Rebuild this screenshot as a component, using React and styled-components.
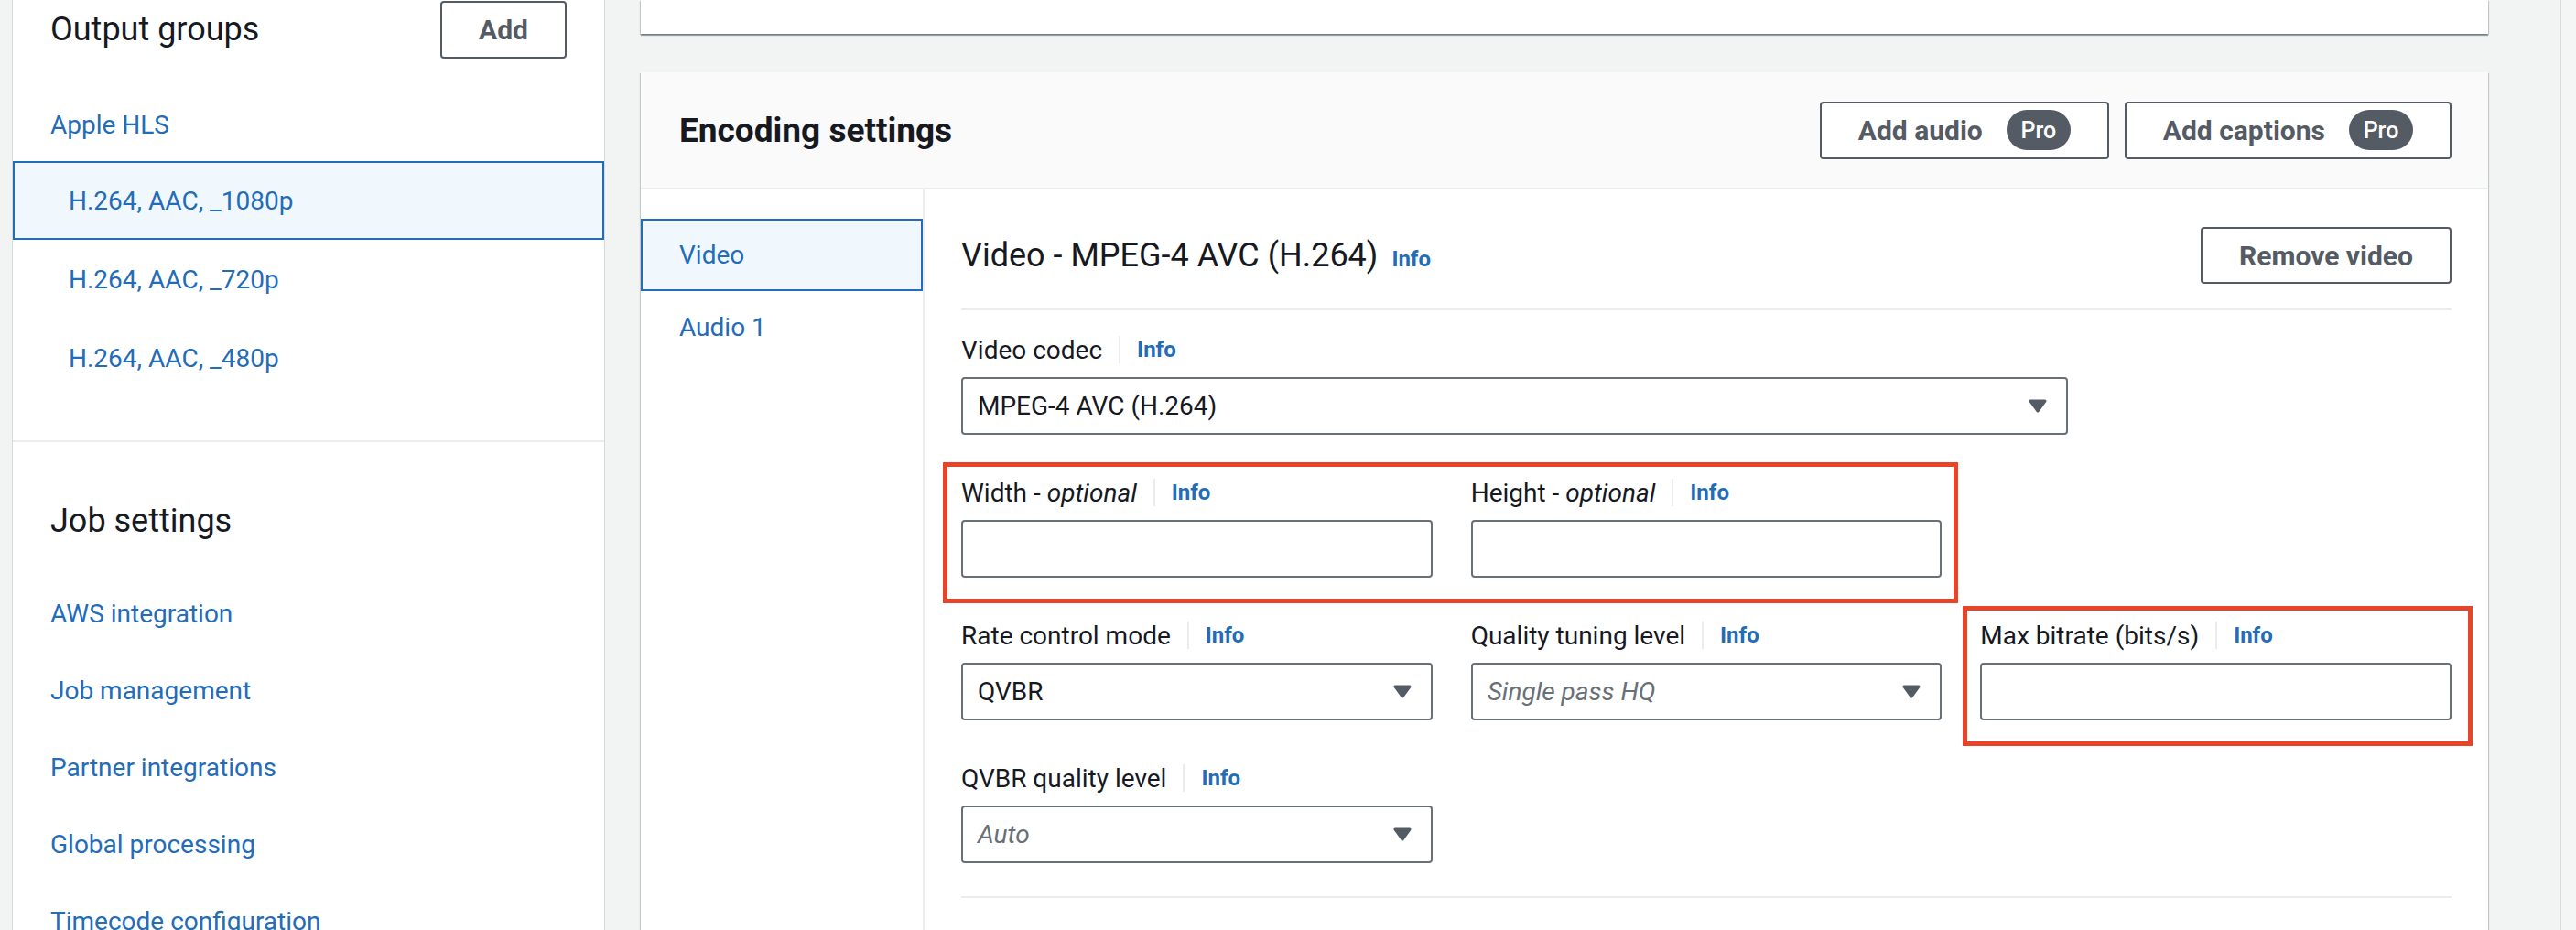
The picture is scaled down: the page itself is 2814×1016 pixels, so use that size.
import React from "react";
import styled, { createGlobalStyle } from "styled-components";

const GlobalStyle = createGlobalStyle`
  html, body {
    margin: 0;
    padding: 0;
    background: #f2f3f3;
  }
  body {
    font-family: Roboto, "Liberation Sans", sans-serif;
    color: #16191f;
    overflow: hidden;
  }
  * {
    box-sizing: border-box;
  }
`;

const BLUE = "#236cb8";

const outputs = ["H.264, AAC, _1080p", "H.264, AAC, _720p", "H.264, AAC, _480p"];
const jobLinks = [
  "AWS integration",
  "Job management",
  "Partner integrations",
  "Global processing",
  "Timecode configuration",
];

const Caret = () => (
  <CaretIcon width="20" height="15" viewBox="0 0 20 15">
    <path d="M2 2 H18 L10 13 Z" fill="#545b64" stroke="#545b64" strokeWidth="3" strokeLinejoin="round" />
  </CaretIcon>
);

const FieldLabel = ({ children }) => (
  <LabelRow>
    <span>{children}</span>
    <Sep />
    <Info>Info</Info>
  </LabelRow>
);

const App = () => {
  return (
    <>
      <GlobalStyle />
      <Page>
        <Sidebar>
          <SideHeader>
            <SideTitle>Output groups</SideTitle>
            <Button>Add</Button>
          </SideHeader>
          <GroupLink>Apple HLS</GroupLink>
          <OutputList>
            {outputs.map((o, i) => (
              <OutputItem key={o} $active={i === 0}>
                {o}
              </OutputItem>
            ))}
          </OutputList>
          <SideDivider />
          <JobTitle>Job settings</JobTitle>
          <JobList>
            {jobLinks.map((l) => (
              <JobLink key={l}>{l}</JobLink>
            ))}
          </JobList>
        </Sidebar>

        <Main>
          <TopCard />
          <Card>
            <CardHeader>
              <CardTitle>Encoding settings</CardTitle>
              <HeaderActions>
                <Button>
                  Add audio <Badge>Pro</Badge>
                </Button>
                <Button>
                  Add captions <Badge>Pro</Badge>
                </Button>
              </HeaderActions>
            </CardHeader>
            <CardBody>
              <Tabs>
                <Tab $active>Video</Tab>
                <Tab>Audio 1</Tab>
              </Tabs>
              <Content>
                <TitleRow>
                  <SectionTitle>
                    Video - MPEG-4 AVC (H.264)
                    <TitleInfo>Info</TitleInfo>
                  </SectionTitle>
                  <Button $h={62}>Remove video</Button>
                </TitleRow>
                <Divider />
                <CodecField>
                  <FieldLabel>Video codec</FieldLabel>
                  <Control>
                    <Value>MPEG-4 AVC (H.264)</Value>
                    <Caret />
                  </Control>
                </CodecField>
                <FieldGrid>
                  <PairGroup>
                    <Field>
                      <FieldLabel>
                        Width - <em>optional</em>
                      </FieldLabel>
                      <Control />
                    </Field>
                    <Field>
                      <FieldLabel>
                        Height - <em>optional</em>
                      </FieldLabel>
                      <Control />
                    </Field>
                  </PairGroup>
                  <div />
                  <Field>
                    <FieldLabel>Rate control mode</FieldLabel>
                    <Control>
                      <Value>QVBR</Value>
                      <Caret />
                    </Control>
                  </Field>
                  <Field>
                    <FieldLabel>Quality tuning level</FieldLabel>
                    <Control>
                      <Value $muted>Single pass HQ</Value>
                      <Caret />
                    </Control>
                  </Field>
                  <Field $highlight>
                    <FieldLabel>Max bitrate (bits/s)</FieldLabel>
                    <Control />
                  </Field>
                  <Field>
                    <FieldLabel>QVBR quality level</FieldLabel>
                    <Control>
                      <Value $muted>Auto</Value>
                      <Caret />
                    </Control>
                  </Field>
                </FieldGrid>
                <BottomDivider />
              </Content>
            </CardBody>
          </Card>
        </Main>
        <Gutter>
          <Scrollbar />
        </Gutter>
      </Page>
    </>
  );
};

export default App;

const Page = styled.div`
  display: flex;
  align-items: flex-start;
  height: 1016px;
  padding-left: 14px;
  overflow: hidden;
`;

const Sidebar = styled.aside`
  width: 646px;
  flex-shrink: 0;
  height: 1016px;
  background: #fff;
  box-shadow: 1px 0 0 #d5dbdb, -1px 0 0 #d5dbdb;
`;

const SideHeader = styled.div`
  display: flex;
  align-items: center;
  justify-content: space-between;
  height: 64px;
  padding: 0 41px;
`;

const SideTitle = styled.h2`
  margin: 0;
  font-size: 36px;
  font-weight: 400;
  color: #16191f;
`;

const Button = styled.button`
  display: inline-flex;
  align-items: center;
  gap: 26px;
  height: ${(p) => p.$h || 63}px;
  padding: 0 40px;
  background: #fff;
  border: 2px solid #545b64;
  border-radius: 4px;
  font-family: inherit;
  font-size: 30px;
  font-weight: 700;
  color: #545b64;
  white-space: nowrap;
`;

const Badge = styled.span`
  display: inline-flex;
  align-items: center;
  justify-content: center;
  width: 70px;
  height: 44px;
  border-radius: 22px;
  background: #545b64;
  color: #fff;
  font-size: 25px;
  font-weight: 500;
`;

const GroupLink = styled.div`
  margin-top: 53px;
  padding-left: 41px;
  line-height: 40px;
  font-size: 28px;
  color: ${BLUE};
`;

const OutputList = styled.div`
  margin-top: 19px;
`;

const OutputItem = styled.div`
  display: flex;
  align-items: center;
  height: 86px;
  padding-left: 59px;
  border: 2px solid ${(p) => (p.$active ? BLUE : "transparent")};
  background: ${(p) => (p.$active ? "#f1f8fd" : "transparent")};
  font-size: 28px;
  color: ${BLUE};
`;

const SideDivider = styled.div`
  margin-top: 47px;
  height: 2px;
  background: #eaeded;
`;

const JobTitle = styled.h2`
  margin: 64px 0 0;
  padding-left: 41px;
  line-height: 44px;
  font-size: 36px;
  font-weight: 400;
`;

const JobList = styled.div`
  margin-top: 38px;
`;

const JobLink = styled.div`
  height: 84px;
  line-height: 84px;
  padding-left: 41px;
  font-size: 28px;
  color: ${BLUE};
`;

const Main = styled.main`
  width: 2018px;
  flex-shrink: 0;
  margin-left: 40px;
`;

const cardShadow = `0 1px 1px 0 rgba(0, 28, 36, 0.3), 1px 1px 1px 0 rgba(0, 28, 36, 0.15), -1px 1px 1px 0 rgba(0, 28, 36, 0.15)`;

const TopCard = styled.div`
  height: 37px;
  background: #fff;
  box-shadow: 0 2px 1px 0 rgba(0, 28, 36, 0.35), 1px 1px 1px 0 rgba(0, 28, 36, 0.15),
    -1px 1px 1px 0 rgba(0, 28, 36, 0.15);
`;

const Card = styled.section`
  margin-top: 42px;
  height: 1000px;
  background: #fff;
  box-shadow: ${cardShadow};
`;

const CardHeader = styled.div`
  display: flex;
  align-items: center;
  justify-content: space-between;
  height: 128px;
  padding: 0 40px 0 42px;
  background: #fafafa;
  border-bottom: 2px solid #eaeded;
`;

const CardTitle = styled.h2`
  margin: 0;
  font-size: 37px;
  font-weight: 700;
`;

const HeaderActions = styled.div`
  display: flex;
  gap: 17px;
`;

const CardBody = styled.div`
  display: flex;
  height: 900px;
`;

const Tabs = styled.nav`
  width: 310px;
  flex-shrink: 0;
  padding-top: 32px;
  border-right: 2px solid #eaeded;
`;

const Tab = styled.div`
  display: flex;
  align-items: center;
  height: 79px;
  padding-left: 40px;
  border: 2px solid ${(p) => (p.$active ? BLUE : "transparent")};
  background: ${(p) => (p.$active ? "#f1f8fd" : "transparent")};
  font-size: 28px;
  color: ${BLUE};
`;

const Content = styled.div`
  flex: 1;
  padding: 41px 40px 0 40px;
`;

const TitleRow = styled.div`
  display: flex;
  align-items: center;
  justify-content: space-between;
  height: 62px;
`;

const SectionTitle = styled.h3`
  margin: 0;
  display: flex;
  align-items: baseline;
  font-size: 36px;
  font-weight: 400;
`;

const TitleInfo = styled.span`
  margin-left: 15px;
  font-size: 24px;
  font-weight: 700;
  color: ${BLUE};
`;

const Divider = styled.div`
  margin-top: 27px;
  height: 2px;
  background: #eaeded;
`;

const BottomDivider = styled(Divider)`
  margin-top: 36px;
`;

const Field = styled.div`
  position: relative;

  ${(p) =>
    p.$highlight &&
    `
    &::after {
      content: "";
      position: absolute;
      top: -12px;
      left: -19px;
      right: -23px;
      bottom: -28px;
      border: 5px solid #e8442a;
      pointer-events: none;
    }
  `}
`;

const CodecField = styled(Field)`
  margin-top: 23px;
  width: 1209px;
`;

const PairGroup = styled.div`
  position: relative;
  grid-column: span 2;
  display: grid;
  grid-template-columns: 1fr 1fr;
  column-gap: 42px;

  &::after {
    content: "";
    position: absolute;
    top: -13px;
    left: -20px;
    right: -18px;
    bottom: -28px;
    border: 5px solid #e8442a;
    pointer-events: none;
  }
`;

const FieldGrid = styled.div`
  display: grid;
  grid-template-columns: repeat(3, 1fr);
  column-gap: 42px;
  row-gap: 43px;
  margin-top: 43px;
`;

const LabelRow = styled.div`
  display: flex;
  align-items: center;
  height: 40px;
  font-size: 28px;
  color: #16191f;
  white-space: pre;

  em {
    font-style: italic;
  }
`;

const Sep = styled.span`
  width: 2px;
  height: 30px;
  margin: 0 18px;
  background: #eaeded;
`;

const Info = styled.span`
  font-size: 24px;
  font-weight: 700;
  color: ${BLUE};
`;

const Control = styled.div`
  display: flex;
  align-items: center;
  justify-content: space-between;
  height: 63px;
  margin-top: 10px;
  padding: 0 16px;
  border: 2px solid #687078;
  border-radius: 4px;
  background: #fff;
`;

const Value = styled.span`
  font-size: 28px;
  color: ${(p) => (p.$muted ? "#687078" : "#16191f")};
  font-style: ${(p) => (p.$muted ? "italic" : "normal")};
`;

const CaretIcon = styled.svg`
  flex-shrink: 0;
  margin-right: 5px;
`;

const Gutter = styled.div`
  flex: 1;
  display: flex;
  justify-content: flex-end;
  height: 1016px;
`;

const Scrollbar = styled.div`
  width: 17px;
  height: 100%;
  border-left: 1px solid #d5dbdb;
  background: #f4f5f5;
`;
